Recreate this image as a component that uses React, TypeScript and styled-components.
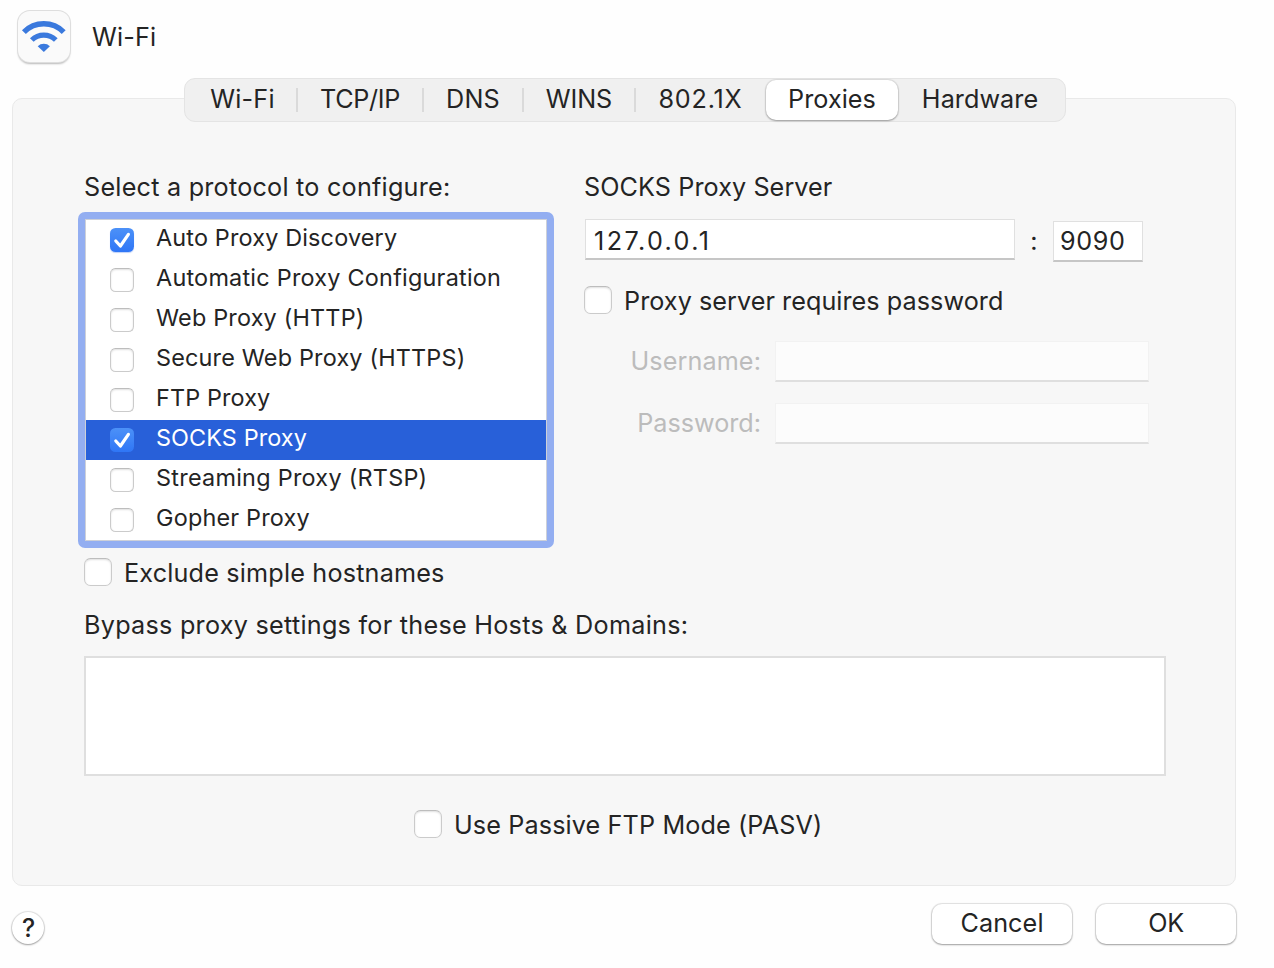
import React, { useState } from "react";
import styled, { createGlobalStyle, css } from "styled-components";

const GlobalStyle = createGlobalStyle`
  *, *::before, *::after { box-sizing: border-box; }
  body {
    margin: 0;
    background: #fefefe;
    color: #242424;
    font-family: Inter, "Liberation Sans", sans-serif;
    font-size: 25.2px;
    line-height: 30px;
    overflow: hidden;
  }
  input, textarea, button { font: inherit; color: inherit; }
`;

const Window = styled.main`
  width: 1274px;
  height: 968px;
  padding: 10px 38px 0 12px;
`;

const Header = styled.header`
  display: flex;
  align-items: center;
  gap: 22px;
  height: 54px;
  padding-left: 6px;
`;

const ServiceIcon = styled.div`
  width: 52px;
  height: 51px;
  margin-bottom: 1px;
  border-radius: 12px;
  background: #fafafa;
  box-shadow: 0 0 0 1px #dedede, 0 2px 2px rgba(0, 0, 0, 0.28);
  svg { display: block; }
`;

const Text = styled.span<{ $track?: number }>`
  white-space: nowrap;
  letter-spacing: ${(p) => p.$track ?? 0.3}px;
`;

const TabBar = styled.nav`
  position: relative;
  display: grid;
  grid-template-columns: 112px 126px 100px 112px 131px 132px 167px;
  width: 882px;
  height: 44px;
  margin: 14px 0 -24px 172px;
  padding: 1px 0;
  border: 1px solid #e4e4e4;
  border-radius: 11px;
  background: #f0f0f0;
`;

const Tab = styled.button<{ $active: boolean; $divider: boolean }>`
  display: flex;
  align-items: center;
  justify-content: center;
  height: 40px;
  padding: 0 0 2px;
  border: 0;
  border-radius: 10px;
  background: transparent;
  position: relative;
  &:first-child { padding-left: 3px; }
  &:last-child { padding-right: 3px; }
  ${(p) =>
    p.$active &&
    css`
      background: #fff;
      box-shadow: 0 0 1px 1px rgba(0, 0, 0, 0.08), 0 1px 2px rgba(0, 0, 0, 0.3);
    `}
  ${(p) =>
    p.$divider &&
    css`
      &::after {
        content: "";
        position: absolute;
        right: -1px;
        top: 8px;
        width: 2px;
        height: 24px;
        background: #dadada;
      }
    `}
`;

const Panel = styled.section`
  height: 788px;
  padding: 73px 69px 0 71px;
  border: 1px solid #e9e9e9;
  border-radius: 10px;
  background: #f7f7f7;
`;

const Columns = styled.div`
  display: grid;
  grid-template-columns: 470px 1fr;
  column-gap: 30px;
`;

const Column = styled.div`
  display: flex;
  flex-direction: column;
`;

const ProtocolList = styled.ul`
  list-style: none;
  width: 476px;
  margin: 10px 0 10px -6px;
  padding: 1px;
  border: 7px solid #93aef1;
  border-radius: 7px;
  background: #fff;
  box-shadow: inset 0 0 0 1px #cdd0d8;
`;

const ProtocolRow = styled.li<{ $selected: boolean }>`
  display: flex;
  align-items: center;
  gap: 22px;
  height: 40px;
  padding-left: 24px;
  font-size: 23.4px;
  background: ${(p) => (p.$selected ? "#2860d9" : "#fff")};
  color: ${(p) => (p.$selected ? "#fff" : "inherit")};
  ${Text} { padding-bottom: 4px; }
`;

const Box = styled.button<{ $size: number; $checked: boolean; $flat?: boolean }>`
  flex: none;
  display: grid;
  place-items: center;
  width: ${(p) => p.$size}px;
  height: ${(p) => p.$size}px;
  padding: 0;
  border: 1px solid #cbcbcb;
  border-top-color: #bdbdbd;
  border-radius: ${(p) => p.$size / 4 - 0.5}px;
  background: #fff;
  box-shadow: inset 0 1px 2px rgba(0, 0, 0, 0.13);
  ${(p) =>
    p.$checked &&
    css`
      border: 0;
      background: linear-gradient(#4c91f8, #2f76f6);
      box-shadow: ${p.$flat ? "none" : "0 1px 1px rgba(40, 100, 230, 0.3)"};
    `}
`;

const CheckRow = styled.div<{ $indent?: number }>`
  display: flex;
  align-items: center;
  gap: 12px;
  height: 28px;
  margin-left: ${(p) => p.$indent ?? 0}px;
  ${Text} { padding-top: 2px; }
`;

const AddressRow = styled.div`
  display: flex;
  align-items: flex-start;
  margin: 17px 0 24px 1px;
`;

const Colon = styled.span`
  width: 38px;
  padding-top: 7px;
  text-align: center;
`;

const Field = styled.input<{ $width: number; $drop?: number; $track: number }>`
  width: ${(p) => p.$width}px;
  height: 41px;
  margin: ${(p) => p.$drop ?? 0}px 0 0;
  padding: 4px 0 0 8px;
  border: 1px solid #e0e0e0;
  border-bottom: 2px solid #c6c6c6;
  border-radius: 0;
  background: #fff;
  letter-spacing: ${(p) => p.$track}px;
  outline: none;
  &:disabled {
    border-color: #f2f2f2;
    border-bottom-color: #dfdfdf;
    background: #fcfcfc;
  }
`;

const PortField = styled(Field)`
  padding: 0 0 1px 6px;
`;

const Credentials = styled.div`
  display: grid;
  grid-template-columns: 177px 374px;
  column-gap: 14px;
  row-gap: 21px;
  align-items: center;
  margin-top: 27px;
  color: #bcbcbc;
  text-align: right;
  ${Text} { padding-bottom: 2px; }
`;

const BypassLabel = styled.label`
  display: block;
  margin: 24px 0 16px;
`;

const BypassArea = styled.textarea`
  display: block;
  width: 1082px;
  height: 120px;
  margin-bottom: 34px;
  border: 2px solid #dfdfdf;
  border-radius: 0;
  background: #fff;
  resize: none;
  outline: none;
`;

const Footer = styled.footer`
  display: flex;
  align-items: flex-end;
  gap: 24px;
  margin-top: 18px;
`;

const raised = css`
  border: 0;
  background: #fff;
  box-shadow: 0 0 1px 1px rgba(0, 0, 0, 0.11), 0 1px 2px rgba(0, 0, 0, 0.3);
`;

const HelpButton = styled.button`
  ${raised}
  width: 32px;
  height: 32px;
  margin: 0 auto 1px 0;
  padding: 0 0 0 1px;
  border-radius: 50%;
  font-weight: 500;
  font-size: 25px;
`;

const PushButton = styled.button`
  ${raised}
  width: 140px;
  height: 40px;
  margin-bottom: 1px;
  padding: 0 0 2px;
  border-radius: 10px;
`;

const WifiGlyph = () => (
  <svg width="52" height="52" viewBox="18 11 52 52" fill="none" stroke="#3a79dd">
    <path d="M23.9 32.1A28 28 0 0 1 63.7 32.1" strokeWidth="5.5" />
    <path d="M31.8 40A17 17 0 0 1 55.8 40" strokeWidth="5.2" />
    <path d="M43.8 52L37.7 46.3A8.8 8.8 0 0 1 49.9 46.3Z" fill="#3a79dd" stroke="none" />
  </svg>
);

const Tick = () => (
  <svg width="24" height="24" viewBox="0 0 24 24" fill="none" stroke="#fff" strokeWidth="3.2" strokeLinecap="round" strokeLinejoin="round">
    <path d="M5.8 13L10.4 18L18.4 6.4" />
  </svg>
);

interface CheckProps {
  size: number;
  checked: boolean;
  flat?: boolean;
  label: string;
  onToggle: () => void;
}

const Check = ({ size, checked, flat, label, onToggle }: CheckProps) => (
  <Box type="button" role="checkbox" aria-checked={checked} aria-label={label} $size={size} $checked={checked} $flat={flat} onClick={onToggle}>
    {checked && <Tick />}
  </Box>
);

const tabs = [
  { name: "Wi-Fi", track: 0.2 },
  { name: "TCP/IP", track: -0.3 },
  { name: "DNS", track: 0.2 },
  { name: "WINS", track: -0.1 },
  { name: "802.1X", track: 0.8 },
  { name: "Proxies", track: 0.05 },
  { name: "Hardware", track: 0.05 },
];

const protocols = [
  { name: "Auto Proxy Discovery", track: 0.17 },
  { name: "Automatic Proxy Configuration", track: 0.24 },
  { name: "Web Proxy (HTTP)", track: 0.2 },
  { name: "Secure Web Proxy (HTTPS)", track: 0.19 },
  { name: "FTP Proxy", track: 0.13 },
  { name: "SOCKS Proxy", track: 0.1 },
  { name: "Streaming Proxy (RTSP)", track: 0.27 },
  { name: "Gopher Proxy", track: 0.2 },
];

export default function App() {
  const [tab, setTab] = useState("Proxies");
  const [selected, setSelected] = useState("SOCKS Proxy");
  const [enabled, setEnabled] = useState<string[]>(["Auto Proxy Discovery", "SOCKS Proxy"]);
  const [options, setOptions] = useState({ password: false, exclude: false, passive: false });

  const toggleProtocol = (name: string) =>
    setEnabled((list) => (list.includes(name) ? list.filter((n) => n !== name) : [...list, name]));
  const toggleOption = (key: keyof typeof options) => setOptions((o) => ({ ...o, [key]: !o[key] }));

  return (
    <>
      <GlobalStyle />
      <Window>
        <Header>
          <ServiceIcon><WifiGlyph /></ServiceIcon>
          <Text $track={0.15}>Wi-Fi</Text>
        </Header>

        <TabBar>
          {tabs.map((t, i) => (
            <Tab key={t.name} type="button" $active={t.name === tab} $divider={i < 4} onClick={() => setTab(t.name)}>
              <Text $track={t.track}>{t.name}</Text>
            </Tab>
          ))}
        </TabBar>

        <Panel>
          <Columns>
            <Column>
              <Text $track={0.23}>Select a protocol to configure:</Text>
              <ProtocolList>
                {protocols.map((p) => (
                  <ProtocolRow key={p.name} $selected={p.name === selected} onClick={() => setSelected(p.name)}>
                    <Check size={24} checked={enabled.includes(p.name)} flat={p.name === selected} label={p.name} onToggle={() => toggleProtocol(p.name)} />
                    <Text $track={p.track}>{p.name}</Text>
                  </ProtocolRow>
                ))}
              </ProtocolList>
              <CheckRow>
                <Check size={28} checked={options.exclude} label="Exclude simple hostnames" onToggle={() => toggleOption("exclude")} />
                <Text $track={0.18}>Exclude simple hostnames</Text>
              </CheckRow>
            </Column>

            <Column>
              <Text $track={0.08}>SOCKS Proxy Server</Text>
              <AddressRow>
                <Field $width={430} $track={2.4} defaultValue="127.0.0.1" />
                <Colon>:</Colon>
                <PortField $width={90} $drop={2} $track={0.6} defaultValue="9090" />
              </AddressRow>
              <CheckRow>
                <Check size={28} checked={options.password} label="Proxy server requires password" onToggle={() => toggleOption("password")} />
                <Text $track={0.05}>Proxy server requires password</Text>
              </CheckRow>
              <Credentials>
                <Text $track={0.1}>Username:</Text>
                <Field $width={374} $track={0} disabled={!options.password} />
                <Text $track={0}>Password:</Text>
                <Field $width={374} $track={0} disabled={!options.password} />
              </Credentials>
            </Column>
          </Columns>

          <BypassLabel><Text $track={0.26}>Bypass proxy settings for these Hosts &amp; Domains:</Text></BypassLabel>
          <BypassArea />
          <CheckRow $indent={330}>
            <Check size={28} checked={options.passive} label="Use Passive FTP Mode (PASV)" onToggle={() => toggleOption("passive")} />
            <Text $track={0.12}>Use Passive FTP Mode (PASV)</Text>
          </CheckRow>
        </Panel>

        <Footer>
          <HelpButton type="button">?</HelpButton>
          <PushButton type="button"><Text $track={0.1}>Cancel</Text></PushButton>
          <PushButton type="button"><Text $track={-0.4}>OK</Text></PushButton>
        </Footer>
      </Window>
    </>
  );
}
